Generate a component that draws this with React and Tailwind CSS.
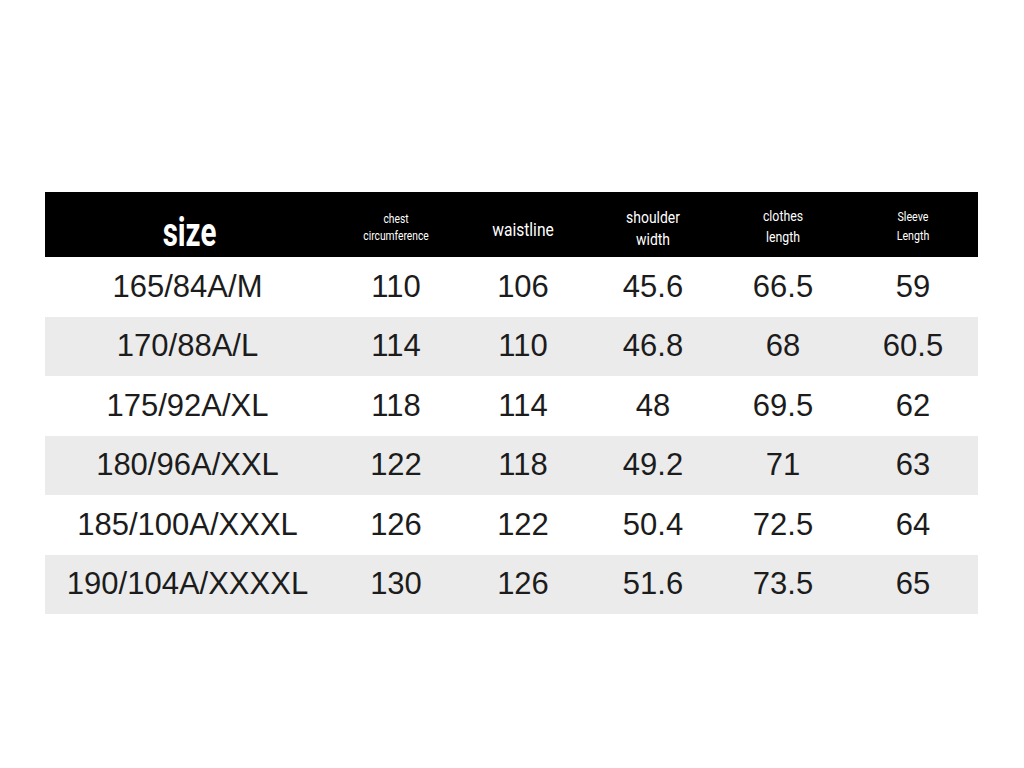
const rows = [
  ['165/84A/M', '110', '106', '45.6', '66.5', '59'],
  ['170/88A/L', '114', '110', '46.8', '68', '60.5'],
  ['175/92A/XL', '118', '114', '48', '69.5', '62'],
  ['180/96A/XXL', '122', '118', '49.2', '71', '63'],
  ['185/100A/XXXL', '126', '122', '50.4', '72.5', '64'],
  ['190/104A/XXXXL', '130', '126', '51.6', '73.5', '65'],
];

const cols = 'grid grid-cols-[289px_124px_130px_130px_130px_130px]';

// header labels use a squeezed Roboto to look condensed
const Head = ({ className, children }) => (
  <div className={className} style={{ fontFamily: 'Roboto, sans-serif', transform: 'scaleX(0.82)' }}>
    {children}
  </div>
);

export default function App() {
  return (
    <div className="w-[1024px] h-[768px] bg-white pt-[192px] pl-[45px]">
      <div className="w-[933px]">
        <div className={`${cols} h-[65px] bg-black text-white items-center text-center`}>
          <div
            className="text-[41px] font-bold leading-none pt-[16px]"
            style={{ fontFamily: 'Roboto, sans-serif', transform: 'scaleX(0.72)' }}
          >
            size
          </div>
          <Head className="text-[12.5px] leading-[17px] pt-[4px]">chest<br />circumference</Head>
          <Head className="text-[19px] leading-none pt-[10px]">waistline</Head>
          <Head className="text-[17px] leading-[22px] pt-[6px]">shoulder<br />width</Head>
          <Head className="text-[15px] leading-[21px] pt-[4px]">clothes<br />length</Head>
          <Head className="text-[13px] leading-[19px] pt-[3px]">Sleeve<br />Length</Head>
        </div>
        {rows.map((r, i) => (
          <div
            key={i}
            className={`${cols} h-[59.5px] items-center text-center text-[31px] text-[#1c1c1c] ${i % 2 ? 'bg-[#ebebeb]' : 'bg-white'}`}
            style={{ fontFamily: '"Liberation Sans", Arial, sans-serif' }}
          >
            {r.map((c, j) => (
              <div key={j} className={j === 0 ? 'pr-[4px]' : ''}>{c}</div>
            ))}
          </div>
        ))}
      </div>
    </div>
  );
}
